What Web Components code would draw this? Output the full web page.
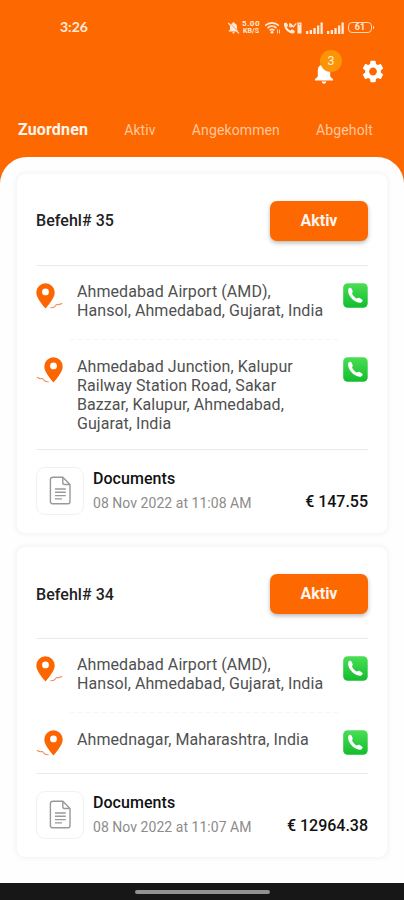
<!DOCTYPE html>
<html lang="de">
<head>
<meta charset="utf-8">
<title>Aufträge</title>
<style>
html,body{margin:0;height:100%;background:#fff;font-family:Roboto,"Liberation Sans",sans-serif}
</style>
</head>
<body>
<delivery-app></delivery-app>
<script>
const define = (name, html, setup) => customElements.define(name, class extends HTMLElement {
  connectedCallback() {
    if (this.shadowRoot) return;
    const root = this.attachShadow({mode: 'open'});
    const t = document.createElement('template');
    t.innerHTML = html;
    root.append(t.content.cloneNode(true));
    if (setup) setup(this, root);
  }
});

define('status-bar', `
<style>
:host{display:flex;box-sizing:border-box;height:54px;padding:0 32px 0 60px;align-items:center;color:#ffe9db}
time{font:700 14px/16px Lato,sans-serif;letter-spacing:0;margin-right:auto}
.icons{display:flex;align-items:center;padding-top:1px}
svg{display:block;fill:currentColor}
.rate{font:700 8px/6.500px Roboto,sans-serif;text-align:center;width:20px;margin:0 3px 0 1px;letter-spacing:.5px}
.rate span{display:block}
.rate span+span{font-size:7px;letter-spacing:.1px}
.bat{box-sizing:border-box;width:24px;height:11px;border:1px solid #ffd8bd;border-radius:4px;font:700 9px/9.500px Roboto,sans-serif;text-align:center;margin-left:4px;position:relative}
.bat::after{content:"";position:absolute;right:-3px;top:3px;width:1px;height:3px;background:#ffd8bd}
</style>
<time>3:26</time>
<div class="icons">
<svg width="13" height="14" viewBox="0 0 13 14"><path d="M6.500 1.200c.6 0 1 .4 1 1 1.700.5 2.500 1.900 2.500 3.500v2.800l1.300 1.500v.6H1.700V10L3 8.500V5.700c0-1.600.9-3 2.500-3.500 0-.6.4-1 1-1zM5.300 11.300h2.400c0 .8-.5 1.300-1.200 1.300s-1.200-.5-1.200-1.300z"/><path d="M1.800 1.500L12 11.500" stroke="#fd6900" stroke-width="1"/><path d="M1.200 2L12 12.300" stroke="currentColor" stroke-width="1.100"/></svg>
<div class="rate"><span>5.00</span><span>KB/S</span></div>
<svg width="18" height="14" viewBox="0 0 18 14"><g fill="none" stroke="currentColor" stroke-width="1.600"><path d="M1.200 4.700c4-3.800 9.600-3.800 13.600 0M3.500 7.100c2.700-2.500 6.300-2.500 9 0M5.600 9.300c1.600-1.300 3.200-1.300 4.800 0"/></g><circle cx="8" cy="11.300" r="1.400"/><path d="M13 8.500h1v4h-1zM15 8.500h1v4h-1z" opacity=".8"/></svg>
<svg width="20" height="14" viewBox="0 0 20 14" style="margin-left:1px"><path d="M1 2.200l2.500-.7 1.600 3-1.300 1.400c.9 1.900 2.100 3 3.700 3.700L9 8.300l2.900 1.600-.7 2.400C5.500 13.200.5 7.500 1 2.200z"/><path d="M6.800 2.300v3.200h2.400M7.300 2.800l3 3 3-3.500" fill="none" stroke="currentColor" stroke-width="1.300"/><path d="M14.500 1.500h4v11h-4zm1.400 1.300v1h1.200v-1z" fill-rule="evenodd"/></svg>
<svg width="17" height="14" viewBox="0 0 17 14" style="margin-left:3px"><path d="M0 10h2.300v3H0zM3.700 9H6v4H3.700zM7.400 7h2.300v6H7.400zM11 4.500h2.300V13H11zM14.500 1.500h2.300V13h-2.300z"/></svg>
<svg width="17" height="14" viewBox="0 0 17 14" style="margin-left:4px"><path d="M0 10h2.300v3H0zM3.700 9H6v4H3.700zM7.400 7h2.300v6H7.400zM11 4.500h2.300V13H11zM14.500 1.500h2.300V13h-2.300z"/></svg>
<div class="bat">61</div>
</div>`);

define('app-actions', `
<style>
:host{display:flex;box-sizing:border-box;height:54px;padding:4px 18px 0 0;justify-content:flex-end;align-items:flex-start;color:#fff}
svg{display:block;fill:currentColor}
.bell{position:relative;width:26px;height:30px;margin-right:23px}
.bell svg{position:absolute;left:0;top:3px}
.badge{position:absolute;left:9px;top:-8px;width:22px;height:22px;border-radius:50%;background:#fd9406;color:#ffeeda;font:400 12.500px/22px Roboto,sans-serif;text-align:center}
</style>
<div class="bell"><svg width="26" height="24" viewBox="0 0 26 24"><path d="M13 1.500c1 0 1.600.7 1.600 1.700 3.200.8 4.600 3.200 4.600 6.300v6l2.800 2.700V19.500H4v-1.300l2.800-2.700v-6c0-3.100 1.400-5.500 4.600-6.300 0-1 .6-1.700 1.600-1.700zM10.800 20.500h4.400c0 1.300-.9 2.200-2.200 2.200s-2.200-.9-2.200-2.200z"/></svg><span class="badge">3</span></div>
<svg width="26" height="27" viewBox="0 0 24 24" preserveAspectRatio="none"><path d="M19.140 12.940c.04-.3.060-.61.060-.94 0-.32-.02-.64-.07-.94l2.030-1.580c.18-.14.23-.41.120-.61l-1.920-3.320c-.12-.22-.37-.29-.59-.22l-2.390.96c-.5-.38-1.030-.7-1.620-.94l-.36-2.540c-.04-.24-.24-.41-.48-.41h-3.840c-.24 0-.43.17-.47.41l-.36 2.540c-.59.24-1.130.57-1.620.94l-2.390-.96c-.22-.08-.47 0-.59.22L2.740 8.870c-.12.21-.08.47.12.61l2.030 1.580c-.05.3-.09.63-.09.94s.02.64.07.94l-2.030 1.580c-.18.14-.23.41-.12.61l1.920 3.320c.12.22.37.29.59.22l2.390-.96c.5.38 1.030.7 1.620.94l.36 2.540c.05.24.24.41.48.41h3.840c.24 0 .44-.17.47-.41l.36-2.540c.59-.24 1.130-.56 1.620-.94l2.390.96c.22.08.47 0 .59-.22l1.920-3.320c.12-.22.07-.47-.12-.61l-2.010-1.580zM12 15.600c-1.980 0-3.600-1.620-3.600-3.600s1.620-3.600 3.600-3.600 3.600 1.620 3.600 3.600-1.620 3.600-3.600 3.600z"/></svg>`);

define('tab-bar', `
<style>
:host{display:flex;box-sizing:border-box;height:49px;padding:12px 31px 0 18px;justify-content:space-between}
</style><slot></slot>`);

define('tab-item', `
<style>
:host{display:block;font-size:14px;line-height:18px;letter-spacing:.12px;color:#ffc69f;padding-top:1px;white-space:nowrap}
:host([active]){font-weight:700;font-size:16px;letter-spacing:.15px;color:#fff5ee}
</style><slot></slot>`);

define('map-stop', `
<style>
:host{display:grid;grid-template-columns:41px 1fr 25px;padding:17px 0 0;align-items:start}
p{margin:0;font-size:16px;line-height:19.100px;letter-spacing:.07px;color:#505050;white-space:pre-line}
:host(:not([end])) p{margin:-1px 0 1px}
svg{display:block}
.pin{width:27px;height:27px}
:host([end]) .pin{transform:scaleX(-1)}
</style>
<svg class="pin" viewBox="0 0 27 27"><path fill="#fd6500" fill-rule="evenodd" d="M9.500.3a9.200 9.200 0 0 0-9.200 9.200c0 5 4.600 10.500 9.200 16 4.600-5.500 9.200-11 9.200-16A9.200 9.200 0 0 0 9.500.3zm0 5.200a3.400 3.400 0 1 1 0 6.800 3.400 3.400 0 0 1 0-6.800z"/><path d="M14.300 24.700c3.200.3 4.300-.3 5.200-2 .9-1.800 1.700-1 2.900-1 1.500.1 2.600-.9 3.800-1.400" fill="none" stroke="#f58a55" stroke-width="1.100"/></svg>
<p><slot></slot></p>
<svg width="25" height="25" viewBox="0 0 25 25"><defs><linearGradient id="g" x2="0" y2="1"><stop stop-color="#4ade55"/><stop offset="1" stop-color="#13bd2d"/></linearGradient></defs><rect x=".2" y=".3" width="24.500" height="24.500" rx="4.500" fill="url(#g)"/><path d="M5.200 6.300c.5-1.400 2.500-2 3.300-.9l1.200 2.900c.3 1-.8 1.400-.6 2.200.7 2.100 2.400 3.900 4.600 4.900.9.200 1.700-1 2.700-.6l2.900 1.900c1.100.9-.5 2.900-1.900 3C11.500 20.400 4 12 5.200 6.300z" fill="#fff"/></svg>`);

define('document-row', `
<style>
:host{display:flex;box-sizing:border-box;height:83px;padding-top:16.500px;align-items:flex-start}
.box{box-sizing:border-box;width:48px;height:48px;border:1.500px solid #f1f1f1;border-radius:9px;display:grid;place-items:center;margin-right:9px}
.info{flex:1}
b{display:block;font-weight:500;font-size:16px;line-height:22px;color:#111;letter-spacing:.05px;margin-top:1px}
small{display:block;font-size:14px;line-height:20px;margin-top:3px;color:#8c8c8c;letter-spacing:.04px;white-space:nowrap}
.sum{font-weight:500;font-size:16px;line-height:20px;color:#111;letter-spacing:-.02px;margin-top:25px}
</style>
<div class="box"><svg width="23" height="29" viewBox="0 0 23 29" fill="none" stroke="#999" stroke-width="1.400"><path d="M4 1.200h9.800l7.200 7.300V25.500c0 1.300-.8 2.200-2 2.200H3.400c-1.200 0-2-.9-2-2.200V3.500C1.400 2.200 2.400 1.200 4 1.200zM13.800 1.500v5.200c0 1.100.7 1.800 1.800 1.800H21"/><path d="M6 13h10.800M6 16.300h10.800M6 19.600h10.800M6 22.900h7"/></svg></div>
<div class="info"><b>Documents</b><small><slot></slot></small></div>
<span class="sum"><slot name="sum"></slot></span>`);

define('order-card', `
<style>
:host{display:block;margin:0 17px 14px;padding:0 19px;border-radius:8px;background:#fff;box-shadow:0 0 4px 1.500px rgba(0,0,0,.04)}
header{box-sizing:border-box;height:91px;padding:3px 0 0;display:flex;justify-content:space-between;align-items:center}
h2{margin:0;font-size:16px;font-weight:500;color:#222;letter-spacing:.05px}
button{box-sizing:border-box;width:98px;height:40px;border:0;border-radius:7px;background:#fd6900;color:#fff5ee;font:700 16px/40px Roboto,sans-serif;letter-spacing:-.05px;padding:0;box-shadow:0 2px 4px rgba(0,0,0,.28)}
hr{border:0;height:1px;margin:0;background:#ebebeb}
.dash{margin:18px 30px 0 34px;background:repeating-linear-gradient(90deg,#f6f6f6 0 5px,#fff 5px 8px)}
.end{margin-top:16px}
</style>
<header><h2></h2><button>Aktiv</button></header><hr>
<slot name="from"></slot><hr class="dash">
<slot name="to"></slot><hr class="end"><slot></slot>`,
(el, root) => { root.querySelector('h2').textContent = 'Befehl# ' + el.getAttribute('number'); });

define('home-bar', `
<style>
:host{display:grid;height:17px;background:#171717;justify-content:center;box-sizing:border-box;align-items:center}
i{display:block;width:135px;height:4px;border-radius:2px;background:#929292}
</style><i></i>`);

define('delivery-app', `
<style>
:host{display:flex;flex-direction:column;height:900px;background:#fd6900;overflow:hidden}
main{flex:1;box-sizing:border-box;background:#fefefe;border-radius:27px 27px 0 0;padding-top:16.500px;overflow:hidden}
</style>
<status-bar></status-bar>
<app-actions></app-actions>
<tab-bar><tab-item active>Zuordnen</tab-item><tab-item>Aktiv</tab-item><tab-item>Angekommen</tab-item><tab-item>Abgeholt</tab-item></tab-bar>
<main>
<order-card number="35">
<map-stop slot="from">Ahmedabad Airport (AMD),
Hansol, Ahmedabad, Gujarat, India</map-stop>
<map-stop slot="to" end>Ahmedabad Junction, Kalupur
Railway Station Road, Sakar
Bazzar, Kalupur, Ahmedabad,
Gujarat, India</map-stop>
<document-row>08 Nov 2022 at 11:08 AM<span slot="sum">€ 147.55</span></document-row>
</order-card>
<order-card number="34">
<map-stop slot="from">Ahmedabad Airport (AMD),
Hansol, Ahmedabad, Gujarat, India</map-stop>
<map-stop slot="to" end>Ahmednagar, Maharashtra, India</map-stop>
<document-row>08 Nov 2022 at 11:07 AM<span slot="sum">€ 12964.38</span></document-row>
</order-card>
</main>
<home-bar></home-bar>`);
</script>
</body>
</html>
